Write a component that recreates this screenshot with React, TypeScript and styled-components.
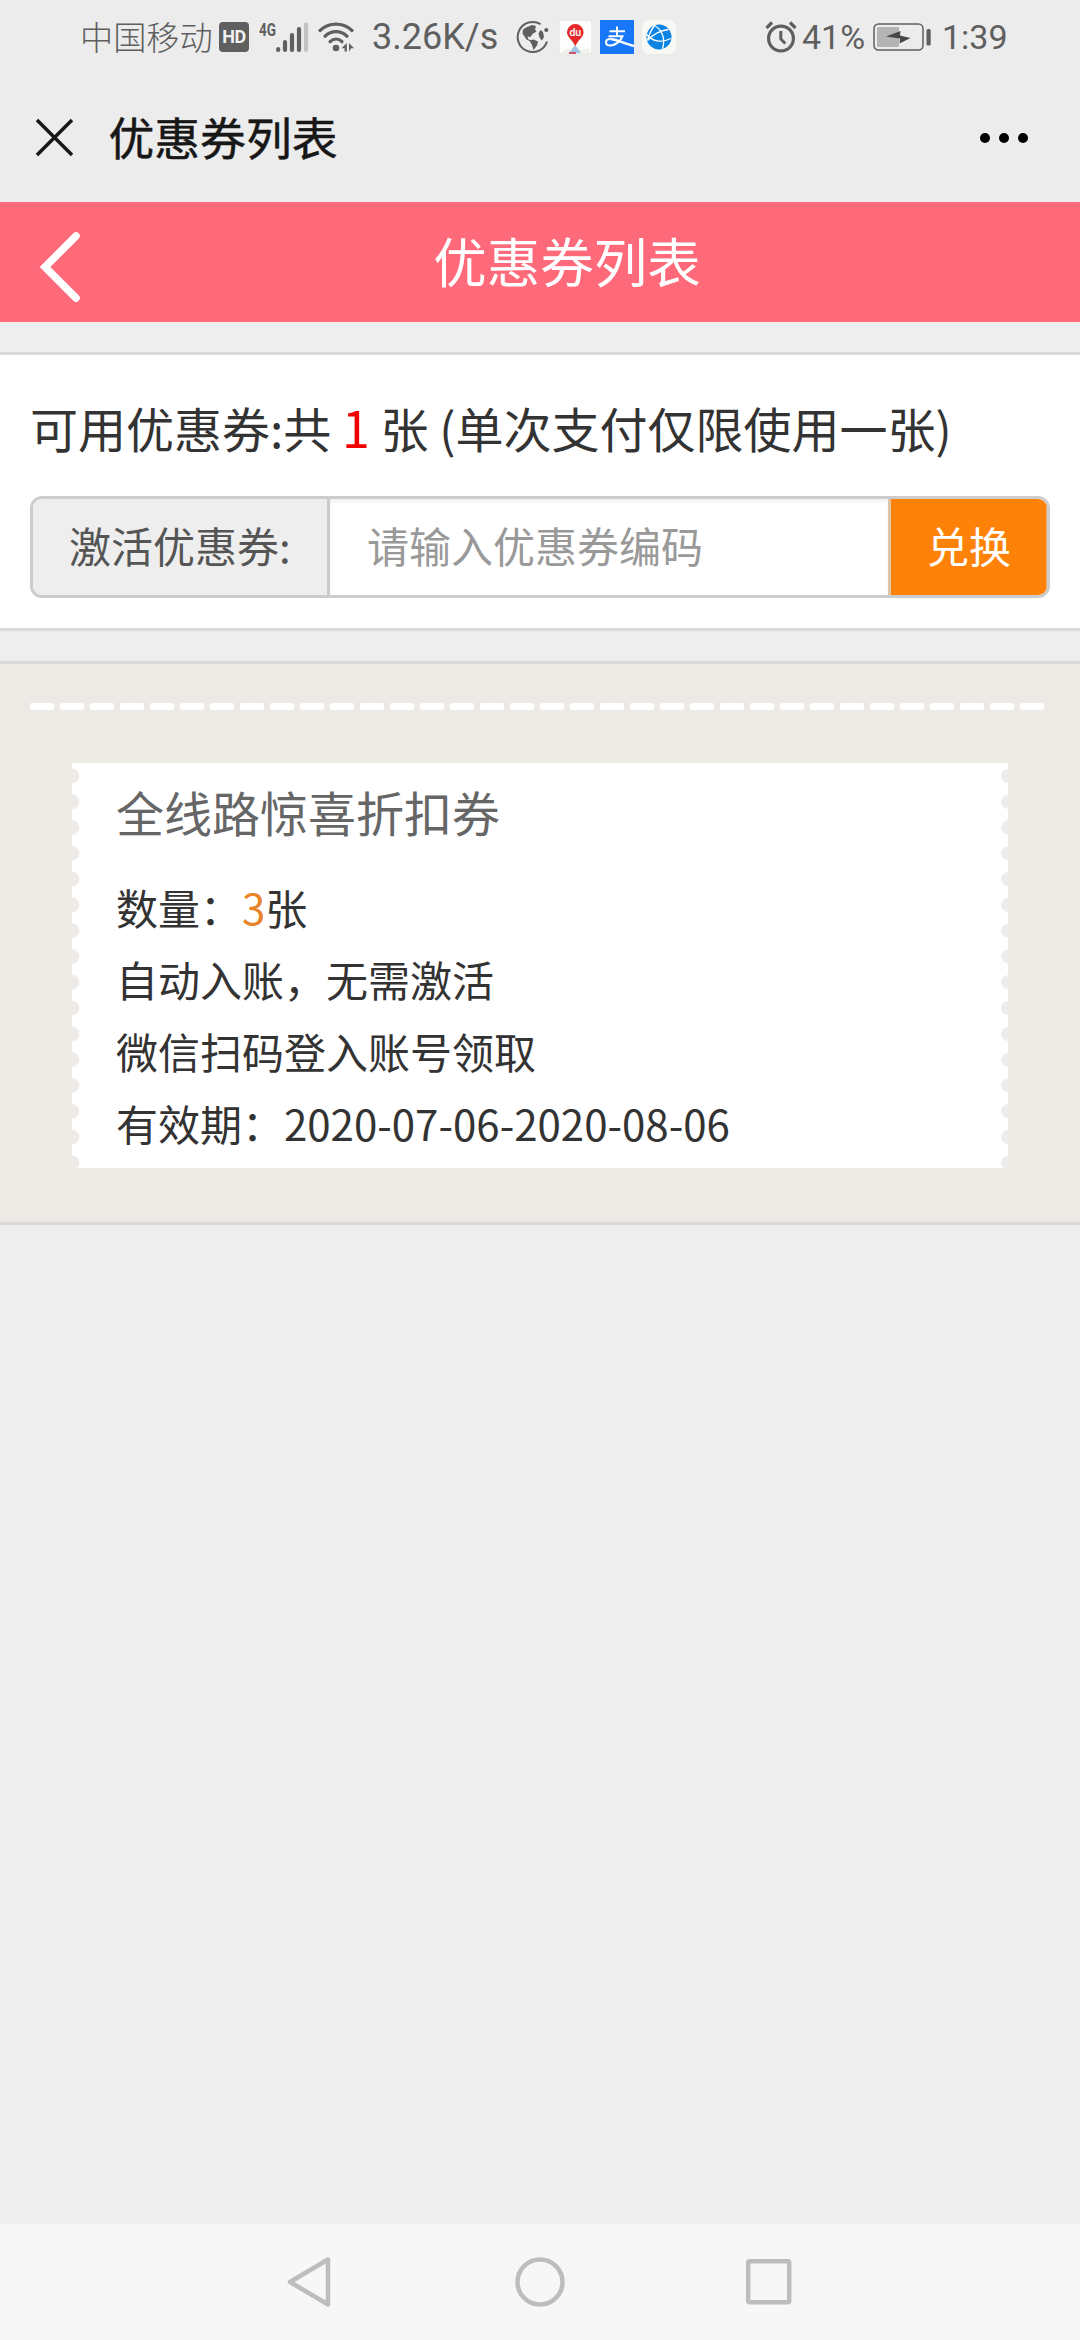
import React from "react";
import styled, { createGlobalStyle } from "styled-components";

const cjk = `"Noto Sans CJK SC", "Noto Sans", sans-serif`;
const latin = `Roboto, "Noto Sans CJK SC", sans-serif`;
const ink = "#5f5f5f";

const GlobalStyle = createGlobalStyle`
  * { box-sizing: border-box; }
  body { margin: 0; background: #eeeeee; font-family: ${cjk}; color: #333333; }
`;

const Screen = styled.div`
  width: 1080px;
  height: 2340px;
  display: flex;
  flex-direction: column;
  overflow: hidden;
  background: #eeeeee;
`;

/* ---------- status bar ---------- */

const StatusBar = styled.div`
  height: 74px;
  display: flex;
  align-items: center;
  padding: 0 72px 0 80px;
  background: #ececec;
  color: ${ink};
  white-space: nowrap;

  svg {
    display: block;
    flex: none;
  }
`;

const Carrier = styled.span`
  width: 133px;
  font: 300 33.2px/40px ${cjk};
  padding-bottom: 3px;
`;

const StatusText = styled.span<{ $size: number; $width: number; $ml?: number }>`
  width: ${(p) => p.$width}px;
  margin-left: ${(p) => p.$ml ?? 0}px;
  font: 400 ${(p) => p.$size}px/40px ${latin};
`;

const HdBadge = styled.span`
  width: 30px;
  height: 30px;
  margin-left: 6px;
  display: flex;
  align-items: center;
  justify-content: center;
  border-radius: 4px;
  background: ${ink};
  color: #f2f2f2;
  font: 700 18px/30px ${latin};
  letter-spacing: -0.5px;
`;

const Spacer = styled.div`
  flex: 1;
`;

const Gap = styled.div<{ $w: number }>`
  flex: none;
  width: ${(p) => p.$w}px;
`;

/* ---------- web view title bar ---------- */

const TitleBar = styled.header`
  height: 128px;
  display: flex;
  align-items: center;
  padding: 0 50px 0 34px;
  background: #ececec;

  svg {
    display: block;
  }
`;

const PageTitle = styled.h1`
  flex: 1;
  margin: 0 0 4px 32.5px;
  font: 400 45.8px/60px ${cjk};
  -webkit-text-stroke: 0.5px #171717;
  color: #171717;
`;

/* ---------- pink header ---------- */

const PinkHeader = styled.div`
  height: 120px;
  display: flex;
  align-items: center;
  background: #ff6a7b;
`;

const BackButton = styled.button`
  width: 134px;
  height: 120px;
  padding: 9px 0 0 36px;
  display: flex;
  align-items: center;
  border: 0;
  background: none;
`;

const PinkTitle = styled.h2`
  flex: 1;
  margin: 0;
  padding: 0 80px 5px 0;
  text-align: center;
  font: 400 53.5px/72px ${cjk};
  color: #ffffff;
`;

/* ---------- content ---------- */

const Panel = styled.section`
  margin-top: 30px;
  padding: 36px 30px 30px;
  border: solid #dadada;
  border-width: 3px 0;
  background: #ffffff;
`;

const Summary = styled.p`
  margin: 0 0 33px;
  font: 400 48px/72px ${cjk};
  white-space: pre;
`;

const Count = styled.span`
  font-size: 50px;
  line-height: 1;
  color: #f20000;
`;

const InputGroup = styled.div`
  height: 102px;
  display: flex;
  border: 3px solid #cccccc;
  border-radius: 12px;
  overflow: hidden;
`;

const GroupLabel = styled.label`
  width: 297px;
  padding: 0 0 5px 36px;
  display: flex;
  align-items: center;
  border-right: 3px solid #cccccc;
  background: #eeeeee;
  color: #555555;
  font: 400 42px/60px ${cjk};
`;

const CodeInput = styled.input`
  flex: 1;
  min-width: 0;
  padding: 0 0 5px 37px;
  border: 0;
  outline: 0;
  background: #ffffff;
  box-shadow: inset 0 3px 3px rgba(0, 0, 0, 0.06);
  font: 400 42px/60px ${cjk};

  &::placeholder {
    color: #999999;
    opacity: 1;
  }
`;

const RedeemButton = styled.button`
  width: 159px;
  padding: 0 0 5px;
  border: 0;
  border-left: 3px solid #dcc4a4;
  background: #ff8208;
  box-shadow: inset -1px 0 0 #f0b070;
  color: #ffffff;
  font: 400 42px/60px ${cjk};
`;

const CouponArea = styled.section`
  margin-top: 30px;
  height: 564px;
  padding: 39px 30px 0;
  border: solid #d9d9d7;
  border-width: 3px 0;
  background: #edeae5;
`;

const Dashes = styled.div`
  height: 7px;
  display: flex;
  gap: 6px;
`;

const Dash = styled.i`
  width: 24px;
  height: 7px;
  border-radius: 2px;
  background: #ffffff;
`;

const CouponCard = styled.article`
  height: 405px;
  margin: 53px 42px 0;
  padding: 12px 44px 0;
  background:
    radial-gradient(circle at 0 50%, #eeeae7 6.8px, transparent 7.8px) 0 0 / 9px 25.8px repeat-y,
    radial-gradient(circle at 100% 50%, #ececeb 6.4px, transparent 7.4px) 100% 0 / 9px 25.8px repeat-y,
    #ffffff;
`;

const CouponTitle = styled.h3`
  margin: 0 0 24px;
  font: 400 48px/72px ${cjk};
  color: #666666;
`;

const CouponLine = styled.p`
  margin: 0;
  font: 400 42px/72px ${cjk};
  white-space: nowrap;
`;

const Amount = styled.span`
  color: #e8852a;
`;

/* ---------- system navigation ---------- */

const NavBar = styled.nav`
  height: 116px;
  margin-top: auto;
  display: grid;
  grid-template-columns: 229px 229px 229px;
  justify-content: center;
  justify-items: center;
  align-items: center;
  background: #f7f7f7;
`;

const dashCount = 34;
const couponNotes = ["自动入账，无需激活", "微信扫码登入账号领取", "有效期：2020-07-06-2020-08-06"];

const SignalIcon = () => (
  <svg width="52" height="38" viewBox="0 -2 52 38">
    <text x="1" y="15.5" fontFamily="Roboto, sans-serif" fontWeight="700" fontSize="18.5" textLength="17" lengthAdjust="spacingAndGlyphs" fill={ink}>4G</text>
    <g strokeWidth="4.2" strokeLinecap="round" stroke={ink}>
      <path d="M20.2 29v1M27 22v8M34 15v15M41 9v21" />
      <path d="M48 4.5V30" stroke="#c2c2c2" />
    </g>
  </svg>
);

const WifiIcon = () => (
  <svg width="38" height="32" viewBox="0 0 38 32">
    <g fill="none" stroke={ink} strokeWidth="3.2" strokeLinecap="round">
      <path d="M2 9.5C11 1 25 1 34 9.5" />
      <path d="M7 15.2c6.500-6 15.500-6 22 0" />
      <path d="M12 20.700c4-3.500 8.500-3.500 12 0" />
    </g>
    <circle cx="18" cy="27" r="3.300" fill={ink} />
    <path d="M28.800 22v8.500h-2.200v-3.200L23.500 27.300zM31 22l5 5.200h-2.800L31 30.500z" fill={ink} />
  </svg>
);

const GlobeIcon = () => (
  <svg width="34" height="34" viewBox="0 0 34 34">
    <path d="M24.500 4.200A15 15 0 1 0 31 21.500" fill="none" stroke={ink} strokeWidth="2" />
    <circle cx="30.300" cy="10" r="2.100" fill={ink} />
    <path d="M10 7.500l6-2.500 4 1-1 3.500 1.500 2-4 2.500-2 3-3-.5 1 3 3 .8-1 1.200-4-2-4-6 .500-4zM13.500 20.500l4-1 4.500 2-1 4-3.500 4.500-1.500-5zM24.500 10l2.500 2 1 5-2 3.500-2.500-3-1-4z" fill={ink} />
  </svg>
);

const MapIcon = () => (
  <svg width="33" height="34" viewBox="0 0 33 34">
    <rect width="33" height="34" rx="2" fill="#fdfdfd" stroke="#dcdcdc" strokeWidth="1" />
    <path d="M2 33l6-5 6 2 3-4 5 4 8-2 2 5z" fill="#f1f3ea" />
    <path d="M16 25l6 8H10z" fill="#9fc6e4" />
    <path d="M10 32h7v2h-7z" fill="#cf5368" />
    <path d="M16.300 4a8.300 8.300 0 0 1 8.300 8.300c0 5-6 8-8.300 14-2.300-6-8.300-9-8.300-14A8.300 8.300 0 0 1 16.300 4z" fill="#e4282c" />
    <text x="16.300" y="16" textAnchor="middle" fontFamily="Roboto, sans-serif" fontWeight="500" fontSize="10.500" fill="#fff">du</text>
  </svg>
);

const PayIcon = () => (
  <svg width="34" height="34" viewBox="0 0 34 34">
    <rect width="34" height="34" fill="#1777f8" />
    <g fill="none" stroke="#fff" strokeWidth="2">
      <path d="M9.500 11.300h15.500M17 6.500v9.500M8.500 16.200h14c-2 5.500-7.500 9.300-12 9.300-3 0-4.500-1.600-4.500-3.300 0-2 2-3.200 4.500-3.200" />
      <path d="M10.500 19c5 0 11 3.700 23.500 7" strokeWidth="2.600" />
    </g>
  </svg>
);

const BrowserIcon = () => (
  <svg width="34" height="34" viewBox="0 0 34 34">
    <rect width="34" height="34" rx="7" fill="#f8f8f5" />
    <circle cx="17" cy="17" r="12.500" fill="#0b84e3" />
    <path d="M12.500 5.500C9.500 9.500 7 14 5.500 20.500M12.500 5.500c6.500 3.500 11.500 12 8 23.500M4.800 14.500c5 6.500 14 9 24 4M5.500 20.500C10.500 15 18 10.500 26.500 9.500" fill="none" stroke="#fff" strokeWidth="1.300" />
  </svg>
);

const AlarmIcon = () => (
  <svg width="32" height="34" viewBox="0 0 32 34">
    <circle cx="16" cy="18.500" r="12.400" fill="none" stroke={ink} strokeWidth="3.200" />
    <path d="M15.800 11v8l4.500 4.500" fill="none" stroke={ink} strokeWidth="3" />
    <path d="M1.500 8l5.500-5.500M30.500 8L25 2.500" stroke={ink} strokeWidth="3.200" />
  </svg>
);

const BatteryIcon = () => (
  <svg width="58" height="28" viewBox="0 0 58 28">
    <rect x="1" y="1" width="49" height="26" rx="4.500" fill="none" stroke={ink} strokeWidth="1.500" />
    <rect x="4" y="4" width="22" height="20" rx="1" fill="#b4b4b4" />
    <path d="M13 13.500l14.500-5.500-.5 4.500 10.500 2.500-11 5.500.5-5z" fill="#484848" />
    <rect x="53.500" y="6" width="4.200" height="16.500" rx="1.500" fill={ink} />
  </svg>
);

export default function App() {
  return (
    <Screen>
      <GlobalStyle />
      <StatusBar>
        <Carrier>中国移动</Carrier>
        <HdBadge>HD</HdBadge>
        <Gap $w={9} />
        <SignalIcon />
        <Gap $w={8} />
        <WifiIcon />
        <StatusText $size={36} $width={127} $ml={16}>3.26K/s</StatusText>
        <Gap $w={17} />
        <GlobeIcon />
        <Gap $w={9} />
        <MapIcon />
        <Gap $w={8} />
        <PayIcon />
        <Gap $w={8} />
        <BrowserIcon />
        <Spacer />
        <AlarmIcon />
        <StatusText $size={34} $width={65} $ml={5}>41%</StatusText>
        <Gap $w={6} />
        <BatteryIcon />
        <StatusText $size={34} $width={66} $ml={11}>1:39</StatusText>
      </StatusBar>

      <TitleBar>
        <svg width="42" height="42" viewBox="0 0 42 42">
          <path d="M3 3l35 35M38 3L3 38" stroke="#171717" strokeWidth="3.500" />
        </svg>
        <PageTitle>优惠券列表</PageTitle>
        <svg width="52" height="12" viewBox="0 0 52 12" fill="#000">
          <circle cx="7" cy="6" r="5" />
          <circle cx="26" cy="6" r="5" />
          <circle cx="45" cy="6" r="5" />
        </svg>
      </TitleBar>

      <PinkHeader>
        <BackButton aria-label="返回">
          <svg width="48" height="72" viewBox="0 0 48 72">
            <path d="M40 5L9 36l31 31" fill="none" stroke="#fff" strokeWidth="7.500" strokeLinecap="round" />
          </svg>
        </BackButton>
        <PinkTitle>优惠券列表</PinkTitle>
      </PinkHeader>

      <Panel>
        <Summary>
          可用优惠券:共 <Count>1</Count> 张 (单次支付仅限使用一张)
        </Summary>
        <InputGroup>
          <GroupLabel htmlFor="code">激活优惠券:</GroupLabel>
          <CodeInput id="code" placeholder="请输入优惠券编码" />
          <RedeemButton>兑换</RedeemButton>
        </InputGroup>
      </Panel>

      <CouponArea>
        <Dashes>
          {Array.from({ length: dashCount }, (_, i) => (
            <Dash key={i} />
          ))}
        </Dashes>
        <CouponCard>
          <CouponTitle>全线路惊喜折扣券</CouponTitle>
          <CouponLine>
            数量：<Amount>3</Amount>张
          </CouponLine>
          {couponNotes.map((note) => (
            <CouponLine key={note}>{note}</CouponLine>
          ))}
        </CouponCard>
      </CouponArea>

      <NavBar>
        <svg width="52" height="56" viewBox="0 0 52 56">
          <path d="M43 5.500v45L5 28z" fill="none" stroke="#bdbdbd" strokeWidth="4.500" strokeLinejoin="round" />
        </svg>
        <svg width="52" height="52" viewBox="0 0 52 52">
          <circle cx="26" cy="26" r="22.500" fill="none" stroke="#bdbdbd" strokeWidth="4.500" />
        </svg>
        <svg width="50" height="50" viewBox="0 0 50 50">
          <rect x="4.200" y="4.200" width="41" height="41" rx="1.500" fill="none" stroke="#bdbdbd" strokeWidth="4.500" />
        </svg>
      </NavBar>
    </Screen>
  );
}
